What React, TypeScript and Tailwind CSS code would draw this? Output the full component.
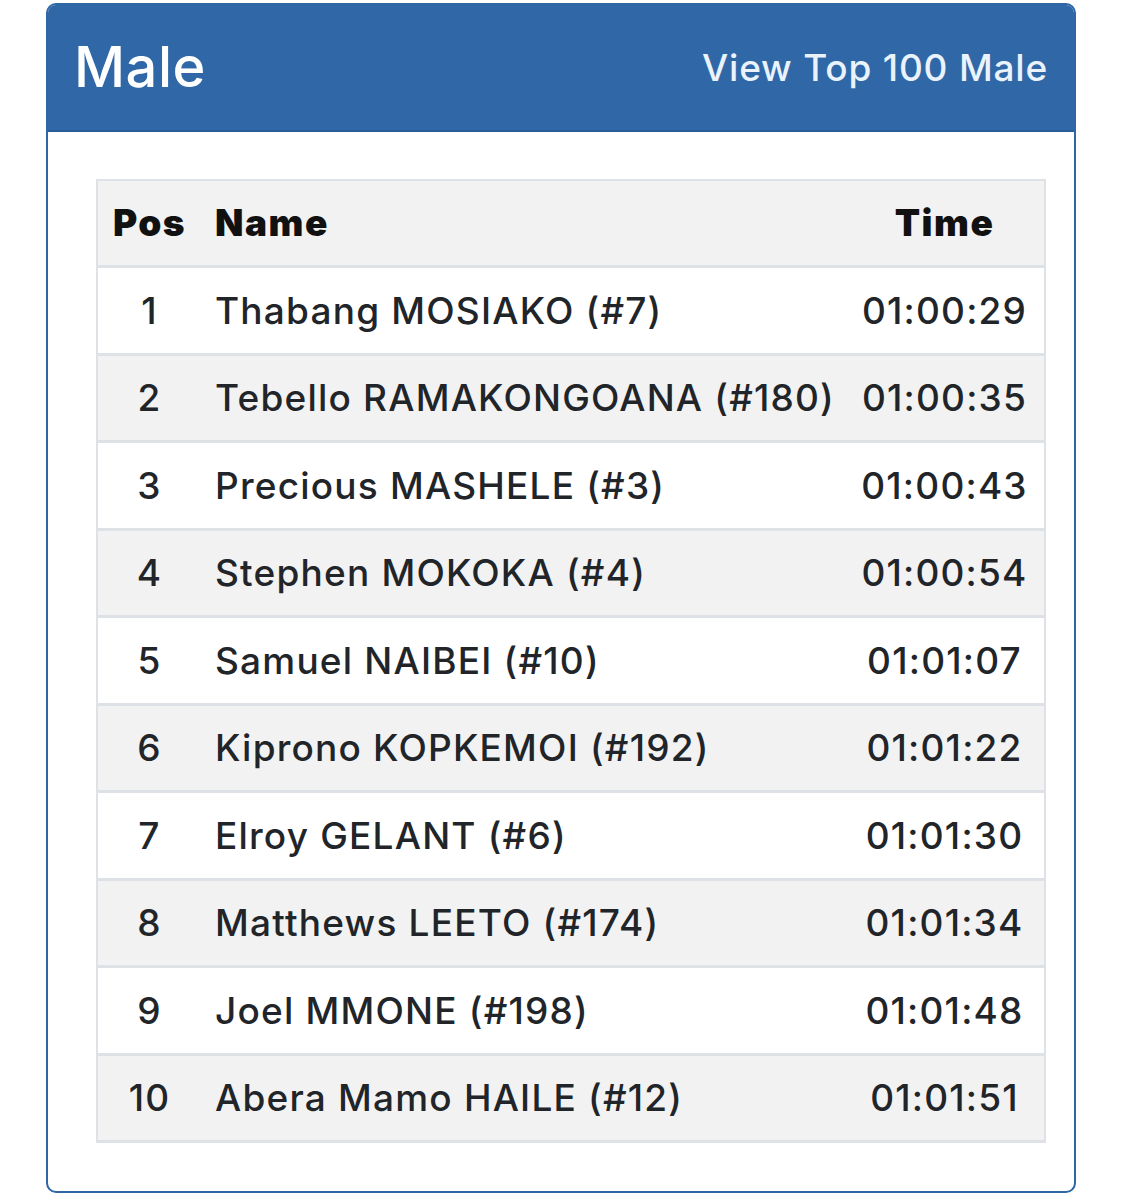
const results = [
  { pos: 1, name: 'Thabang MOSIAKO (#7)', time: '01:00:29' },
  { pos: 2, name: 'Tebello RAMAKONGOANA (#180)', time: '01:00:35' },
  { pos: 3, name: 'Precious MASHELE (#3)', time: '01:00:43' },
  { pos: 4, name: 'Stephen MOKOKA (#4)', time: '01:00:54' },
  { pos: 5, name: 'Samuel NAIBEI (#10)', time: '01:01:07' },
  { pos: 6, name: 'Kiprono KOPKEMOI (#192)', time: '01:01:22' },
  { pos: 7, name: 'Elroy GELANT (#6)', time: '01:01:30' },
  { pos: 8, name: 'Matthews LEETO (#174)', time: '01:01:34' },
  { pos: 9, name: 'Joel MMONE (#198)', time: '01:01:48' },
  { pos: 10, name: 'Abera Mamo HAILE (#12)', time: '01:01:51' },
];

export default function App() {
  return (
    <div className="min-h-[1200px] bg-white pt-[3px] pl-[46px] font-['Inter',sans-serif]">
      <div className="w-[1030px] h-[1190px] border-2 border-[#2e66a6] rounded-[10px] overflow-hidden flex flex-col">
        {/* card header */}
        <div className="h-[127px] bg-[#2f67a7] border-b-2 border-[#2a5d97] px-[26px] flex items-center justify-between">
          <h2 className="text-[56px] font-medium text-white leading-none tracking-[0.5px]">Male</h2>
          <a className="text-[37px] font-medium text-[#eaf2fb] leading-none tracking-[0.8px]">View Top 100 Male</a>
        </div>

        <div className="p-[48px] pt-[47px]">
          <table className="w-[950px] table-fixed border-collapse border-2 border-[#dee2e6] text-[#212529]">
            <colgroup>
              <col className="w-[104px]" />
              <col />
              <col className="w-[200px]" />
            </colgroup>
            <thead>
              <tr className="h-[87px] bg-[#f2f2f2] border-b-[3px] border-[#dee2e6]">
                <th className="text-center text-[37px] font-black text-[#111] tracking-[1.5px]">Pos</th>
                <th className="text-left pl-[14px] text-[37px] font-black text-[#111] tracking-[1.5px]">Name</th>
                <th className="text-center text-[37px] font-black text-[#111] tracking-[1.5px]">Time</th>
              </tr>
            </thead>
            <tbody>
              {results.map((r) => (
                <tr
                  key={r.pos}
                  className={`h-[87.5px] border-b-[3px] border-[#dee2e6] ${r.pos % 2 === 0 ? 'bg-[#f2f2f2]' : 'bg-white'}`}
                >
                  <td className="text-center text-[37px] font-medium tracking-[1.2px]">{r.pos}</td>
                  <td className="pl-[14px] text-[37px] font-medium tracking-[1.2px] whitespace-nowrap">{r.name}</td>
                  <td className="text-center text-[37px] font-medium tracking-[1.2px]">{r.time}</td>
                </tr>
              ))}
            </tbody>
          </table>
        </div>
      </div>
    </div>
  );
}
